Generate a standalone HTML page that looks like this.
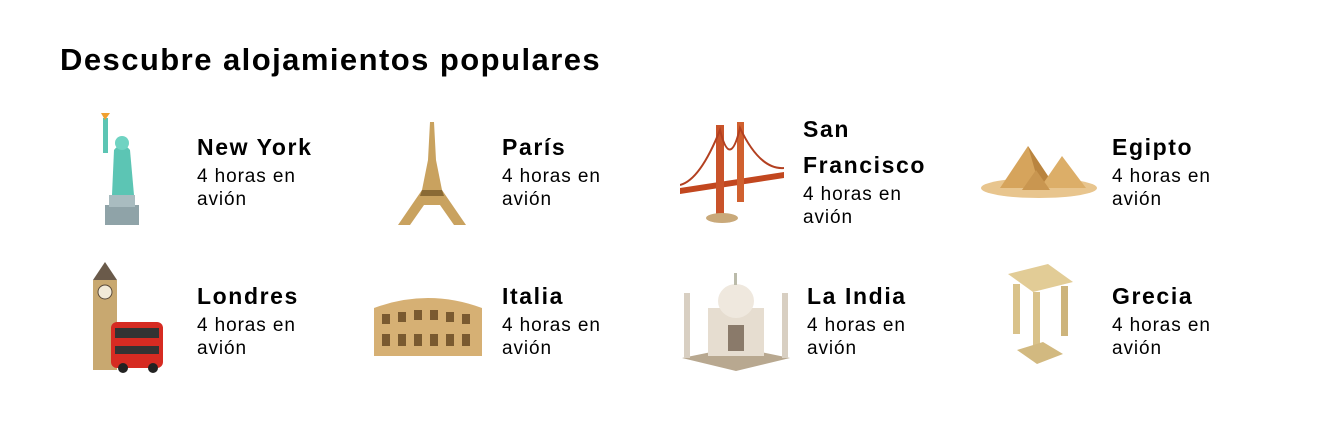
<!DOCTYPE html>
<html><head><meta charset="utf-8"><style>
body{margin:0;width:1333px;height:436px;background:#fff;font-family:"Liberation Sans","DejaVu Sans",sans-serif;color:#000;position:relative;overflow:hidden}
h1{position:absolute;left:60px;top:42px;margin:0;font-size:31px;font-weight:bold;letter-spacing:1.45px}
.t{position:absolute;width:140px}
.t b{display:block;font-size:23px;line-height:36px;letter-spacing:1.6px}
.t span{display:block;font-size:19px;line-height:23px;letter-spacing:0.9px;width:115px}
svg{position:absolute}
</style></head><body>
<h1>Descubre alojamientos populares</h1>

<svg style="left:90px;top:110px" width="60" height="120" viewBox="0 0 60 120">
<rect x="15" y="95" width="34" height="20" fill="#8fa3a8"/><rect x="19" y="85" width="26" height="12" fill="#a9bcc0"/>
<path d="M22 85 L24 40 Q32 30 40 40 L44 85 Z" fill="#5cc5b4"/><circle cx="32" cy="33" r="7" fill="#6fd3c2"/>
<rect x="13" y="8" width="5" height="35" fill="#5cc5b4"/><path d="M11 3 L20 3 L15 10 Z" fill="#f0a030"/></svg>
<div class="t" style="left:197px;top:129px"><b>New York</b><span>4 horas en avión</span></div>

<svg style="left:392px;top:120px" width="80" height="108" viewBox="0 0 80 108">
<path d="M38 2 L42 2 L44 40 L50 70 L74 105 L62 105 L48 85 L32 85 L18 105 L6 105 L30 70 L36 40 Z" fill="#c9a25f"/>
<path d="M30 70 L50 70 L52 76 L28 76 Z" fill="#8a6a35"/></svg>
<div class="t" style="left:502px;top:129px"><b>París</b><span>4 horas en avión</span></div>

<svg style="left:680px;top:120px" width="104" height="105" viewBox="0 0 104 105">
<path d="M0 68 L104 52 L104 58 L0 74 Z" fill="#c2471f"/>
<rect x="36" y="5" width="8" height="90" fill="#c9532a"/><rect x="57" y="2" width="7" height="80" fill="#d0602f"/>
<path d="M0 65 Q20 60 40 10 Q50 50 60 8 Q80 50 104 48" stroke="#b34020" stroke-width="2" fill="none"/>
<ellipse cx="42" cy="98" rx="16" ry="5" fill="#c9a97a"/></svg>
<div class="t" style="left:803px;top:111px"><b>San Francisco</b><span>4 horas en avión</span></div>

<svg style="left:980px;top:138px" width="118" height="62" viewBox="0 0 118 62">
<ellipse cx="59" cy="50" rx="58" ry="10" fill="#e8c58e"/>
<path d="M20 50 L48 8 L76 50 Z" fill="#d6a45c"/><path d="M48 8 L76 50 L60 50 Z" fill="#b9843f"/>
<path d="M60 50 L82 18 L106 50 Z" fill="#dcae68"/><path d="M42 52 L56 32 L70 52 Z" fill="#c99650"/></svg>
<div class="t" style="left:1112px;top:129px"><b>Egipto</b><span>4 horas en avión</span></div>

<svg style="left:83px;top:260px" width="85" height="115" viewBox="0 0 85 115">
<rect x="10" y="20" width="24" height="90" fill="#c8a870"/><path d="M10 20 L22 2 L34 20 Z" fill="#6a5a4a"/>
<circle cx="22" cy="32" r="7" fill="#f2ead8" stroke="#5a4a3a"/>
<rect x="28" y="62" width="52" height="46" rx="6" fill="#d62b22"/><rect x="32" y="68" width="44" height="10" fill="#333"/><rect x="32" y="86" width="44" height="8" fill="#333"/>
<circle cx="40" cy="108" r="5" fill="#222"/><circle cx="70" cy="108" r="5" fill="#222"/></svg>
<div class="t" style="left:197px;top:278px"><b>Londres</b><span>4 horas en avión</span></div>

<svg style="left:372px;top:288px" width="112" height="72" viewBox="0 0 112 72">
<path d="M2 20 Q56 0 110 20 L110 68 L2 68 Z" fill="#d6b074"/>
<g fill="#7a5a30"><rect x="10" y="26" width="8" height="10"/><rect x="26" y="24" width="8" height="10"/><rect x="42" y="22" width="8" height="10"/><rect x="58" y="22" width="8" height="10"/><rect x="74" y="24" width="8" height="10"/><rect x="90" y="26" width="8" height="10"/>
<rect x="10" y="46" width="8" height="12"/><rect x="26" y="46" width="8" height="12"/><rect x="42" y="46" width="8" height="12"/><rect x="58" y="46" width="8" height="12"/><rect x="74" y="46" width="8" height="12"/><rect x="90" y="46" width="8" height="12"/></g></svg>
<div class="t" style="left:502px;top:278px"><b>Italia</b><span>4 horas en avión</span></div>

<svg style="left:678px;top:263px" width="116" height="110" viewBox="0 0 116 110">
<path d="M4 95 L58 108 L112 95 L58 84 Z" fill="#b8a890"/>
<rect x="30" y="45" width="56" height="48" fill="#e6ddd0"/><ellipse cx="58" cy="38" rx="18" ry="17" fill="#efe8de"/><rect x="56" y="10" width="3" height="12" fill="#bba"/>
<rect x="6" y="30" width="6" height="65" fill="#d8cfc2"/><rect x="104" y="30" width="6" height="65" fill="#d8cfc2"/>
<rect x="50" y="62" width="16" height="26" fill="#8a7a6a"/></svg>
<div class="t" style="left:807px;top:278px"><b>La India</b><span>4 horas en avión</span></div>

<svg style="left:1003px;top:262px" width="75" height="105" viewBox="0 0 75 105">
<path d="M5 12 L45 2 L70 20 L30 30 Z" fill="#e2cc96"/>
<rect x="10" y="22" width="7" height="50" fill="#d9c28a"/><rect x="30" y="30" width="7" height="55" fill="#d9c28a"/><rect x="58" y="24" width="7" height="50" fill="#cdb47c"/>
<path d="M14 88 L40 80 L60 92 L34 102 Z" fill="#d2b980"/></svg>
<div class="t" style="left:1112px;top:278px"><b>Grecia</b><span>4 horas en avión</span></div>
</body></html>
